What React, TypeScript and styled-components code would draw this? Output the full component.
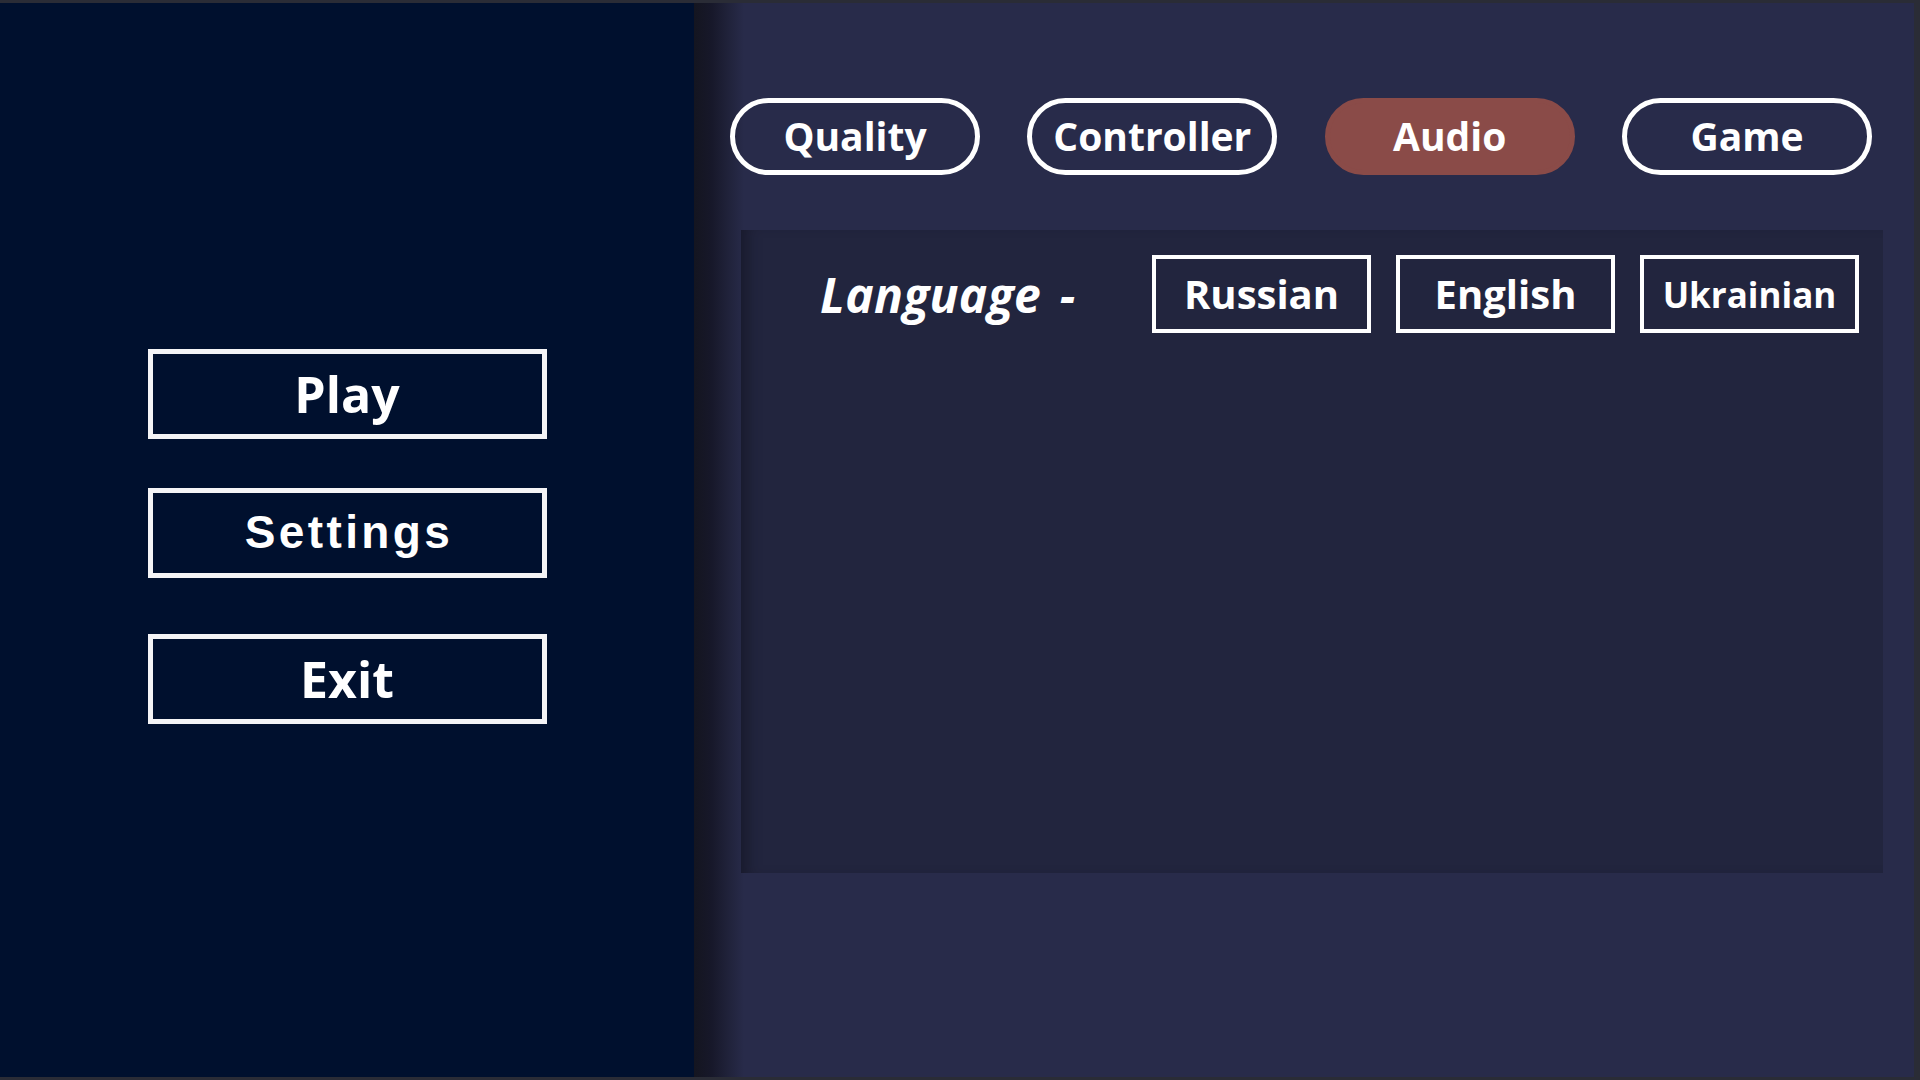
import React, { useState } from "react";
import styled, { createGlobalStyle, css } from "styled-components";

const GlobalStyle = createGlobalStyle`
  html, body {
    margin: 0;
    padding: 0;
    height: 100%;
    background: #2b2b2d;
    overflow: hidden;
  }
  #root {
    height: 100%;
  }
  * { box-sizing: border-box; }
`;

const Frame = styled.div`
  height: 100vh;
  padding: 3px 6px 3px 0;
  background: #2a2c36;
  display: flex;
`;

const Screen = styled.div`
  flex: 1;
  display: flex;
  min-height: 0;
`;

const MenuPanel = styled.aside`
  width: 694px;
  flex: none;
  background: #00102e;
  display: flex;
  flex-direction: column;
  align-items: center;
  justify-content: center;
  padding-bottom: 8px;
`;

const MenuButton = styled.button<{ $mt?: number; $arial?: boolean }>`
  width: 399px;
  height: 90px;
  margin-top: ${(p) => p.$mt ?? 0}px;
  background: transparent;
  border: 5px solid #f4f4f6;
  color: #ffffff;
  font-family: "Open Sans", "Noto Sans", sans-serif;
  font-weight: 700;
  font-size: 50px;
  line-height: 1;
  display: flex;
  align-items: center;
  justify-content: center;
  padding: 0;
  cursor: pointer;
  ${(p) =>
    p.$arial &&
    css`
      font-family: "Liberation Sans", Arial, sans-serif;
      font-size: 46px;
      letter-spacing: 3.4px;
      padding: 0 0 2px 4px;
    `}
`;

const SettingsPanel = styled.main`
  flex: 1;
  display: flex;
  flex-direction: column;
  background-color: #282b4a;
  background-image: linear-gradient(
    to right,
    #141520 0px,
    #17182a 18px,
    #1f2138 32px,
    #282b4a 50px,
    #282b4a 100%
  );
  padding: 95px 42px 0 36px;
`;

const TabRow = styled.nav`
  display: flex;
  justify-content: space-between;
  align-items: center;
`;

const Tab = styled.button<{ $active?: boolean }>`
  width: 250px;
  height: 77px;
  border-radius: 39px;
  border: 5px solid ${(p) => (p.$active ? "#8a4b48" : "#ffffff")};
  background: ${(p) => (p.$active ? "#8a4b48" : "transparent")};
  color: #ffffff;
  font-family: "Open Sans", "Noto Sans", sans-serif;
  font-weight: 700;
  font-size: 39px;
  line-height: 1;
  display: flex;
  align-items: center;
  justify-content: center;
  padding: 0 0 2px;
  cursor: pointer;
`;

const ContentBox = styled.section`
  margin: 55px -11px 0 11px;
  height: 643px;
  background: #22253e;
  box-shadow: inset 14px 0 14px -8px rgba(18, 19, 32, 0.6);
  padding: 25px 24px 0 79px;
`;

const OptionRow = styled.div`
  display: flex;
  align-items: center;
`;

const OptionLabel = styled.span`
  font-family: "Open Sans", "Noto Sans", sans-serif;
  font-style: italic;
  font-weight: 700;
  font-size: 48px;
  word-spacing: 6px;
  letter-spacing: 0.3px;
  color: #ffffff;
  line-height: 1;
  padding-top: 2px;
`;

const Choices = styled.div`
  margin-left: auto;
  display: flex;
  gap: 25px;
  align-items: center;
`;

const Choice = styled.button<{ $small?: boolean }>`
  width: 219px;
  height: 78px;
  border: 4px solid #ffffff;
  background: transparent;
  color: #ffffff;
  font-family: "Open Sans", "Noto Sans", sans-serif;
  font-weight: 700;
  font-size: ${(p) => (p.$small ? 35 : 40)}px;
  line-height: 1;
  display: flex;
  align-items: center;
  justify-content: center;
  padding: 0;
  cursor: pointer;
`;

const tabs = ["Quality", "Controller", "Audio", "Game"];

export default function App() {
  const [active, setActive] = useState("Audio");
  return (
    <>
      <GlobalStyle />
      <Frame>
        <Screen>
          <MenuPanel>
            <MenuButton>Play</MenuButton>
            <MenuButton $mt={49} $arial>
              Settings
            </MenuButton>
            <MenuButton $mt={56}>Exit</MenuButton>
          </MenuPanel>
          <SettingsPanel>
            <TabRow>
              {tabs.map((t) => (
                <Tab key={t} $active={t === active} onClick={() => setActive(t)}>
                  {t}
                </Tab>
              ))}
            </TabRow>
            <ContentBox>
              <OptionRow>
                <OptionLabel>Language -</OptionLabel>
                <Choices>
                  <Choice>Russian</Choice>
                  <Choice>English</Choice>
                  <Choice $small>Ukrainian</Choice>
                </Choices>
              </OptionRow>
            </ContentBox>
          </SettingsPanel>
        </Screen>
      </Frame>
    </>
  );
}
